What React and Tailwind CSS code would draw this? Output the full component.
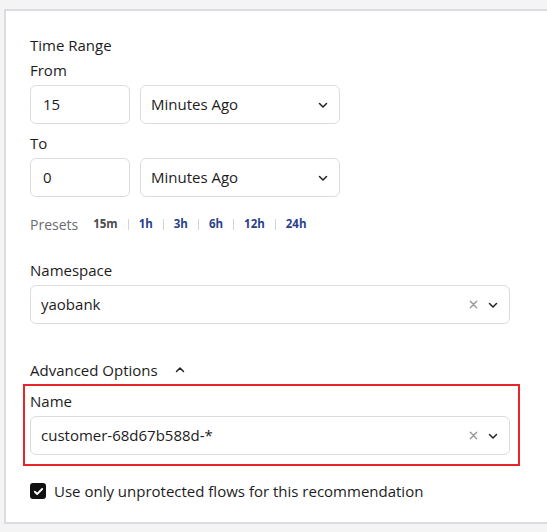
const ChevronDown = () => (
  <svg width="12" height="12" viewBox="0 0 24 24" fill="none" stroke="#222" strokeWidth="3" strokeLinecap="round" strokeLinejoin="round">
    <path d="M5 9l7 7 7-7" />
  </svg>
);
const ChevronUp = () => (
  <svg width="12" height="12" viewBox="0 0 24 24" fill="none" stroke="#222" strokeWidth="3" strokeLinecap="round" strokeLinejoin="round">
    <path d="M5 15l7-7 7 7" />
  </svg>
);
const ClearX = () => (
  <svg width="9" height="9" viewBox="0 0 10 10" fill="none" stroke="#9a9a9a" strokeWidth="1.6" strokeLinecap="round">
    <path d="M1.5 1.5l7 7M8.5 1.5l-7 7" />
  </svg>
);

const Label = ({ children, className = "" }) => (
  <div className={`h-5 leading-5 text-[15px] text-[#1c1c1c] ${className}`}>{children}</div>
);

const TimeRow = ({ value }) => (
  <div className="flex gap-[10px]">
    <div className="w-[100px] h-[39px] rounded-md border border-[#dcdcde] flex items-center pl-[12px] text-[15px] text-[#1c1c1c]">
      {value}
    </div>
    <div className="w-[200px] h-[39px] rounded-md border border-[#dcdcde] flex items-center justify-between pl-[10px] pr-[10px] text-[15px] text-[#1c1c1c]">
      <span>Minutes Ago</span>
      <ChevronDown />
    </div>
  </div>
);

const SelectBox = ({ value }) => (
  <div className="w-[480px] h-[39px] rounded-md border border-[#dcdcde] flex items-center pl-[10px] pr-[10px] text-[15px] text-[#1c1c1c]">
    <span className="flex-1">{value}</span>
    <span className="flex items-center gap-[9px]">
      <ClearX />
      <ChevronDown />
    </span>
  </div>
);

const Sep = () => <span className="w-px h-[11px] bg-[#d4d4d8]" />;

export default function App() {
  const presets = ["1h", "3h", "6h", "12h", "24h"];
  return (
    <div className="w-[547px] h-[532px] overflow-hidden bg-[#f4f4f5] pt-[9px] pl-[4px]"
      style={{ fontFamily: '"Open Sans", sans-serif' }}>
      <div className="w-[560px] h-[515px] bg-white border-2 border-[#dcdce0] pl-[24px] pt-[24px]">
        <Label>Time Range</Label>
        <Label className="mt-[5px]">From</Label>
        <div className="mt-[5px]"><TimeRow value="15" /></div>
        <Label className="mt-[9px]">To</Label>
        <div className="mt-[5px]"><TimeRow value="0" /></div>

        <div className="mt-[17px] h-5 flex items-center">
          <span className="text-[#6b6b70] text-[14px] mr-[15px]">Presets</span>
          <span className="flex items-center gap-[10px] font-bold text-[11.5px]">
            <span className="text-[#4a4a4f]">15m</span>
            {presets.map((p) => (
              <span key={p} className="flex items-center gap-[10px]">
                <Sep />
                <span className="text-[#2b3f8c]">{p}</span>
              </span>
            ))}
          </span>
        </div>

        <Label className="mt-[26px]">Namespace</Label>
        <div className="mt-[5px]"><SelectBox value="yaobank" /></div>

        <div className="mt-[36px] h-5 flex items-center gap-[16px] text-[15px] text-[#1c1c1c]">
          <span>Advanced Options</span>
          <ChevronUp />
        </div>

        <div className="mt-[4px] -ml-[7px] w-[497px] border-2 border-[#e8262a] pl-[5px] pt-[5px] pb-[9px]">
          <Label>Name</Label>
          <div className="mt-[5px]"><SelectBox value="customer-68d67b588d-*" /></div>
        </div>

        <div className="mt-[15px] flex items-center gap-[8px]">
          <span className="w-4 h-4 rounded-[3px] bg-[#111] flex items-center justify-center">
            <svg width="11" height="11" viewBox="0 0 24 24" fill="none" stroke="#fff" strokeWidth="4" strokeLinecap="round" strokeLinejoin="round">
              <path d="M4 12.5l5 5L20 6.5" />
            </svg>
          </span>
          <span className="text-[15px] text-[#1c1c1c] leading-5">Use only unprotected flows for this recommendation</span>
        </div>
      </div>
    </div>
  );
}
